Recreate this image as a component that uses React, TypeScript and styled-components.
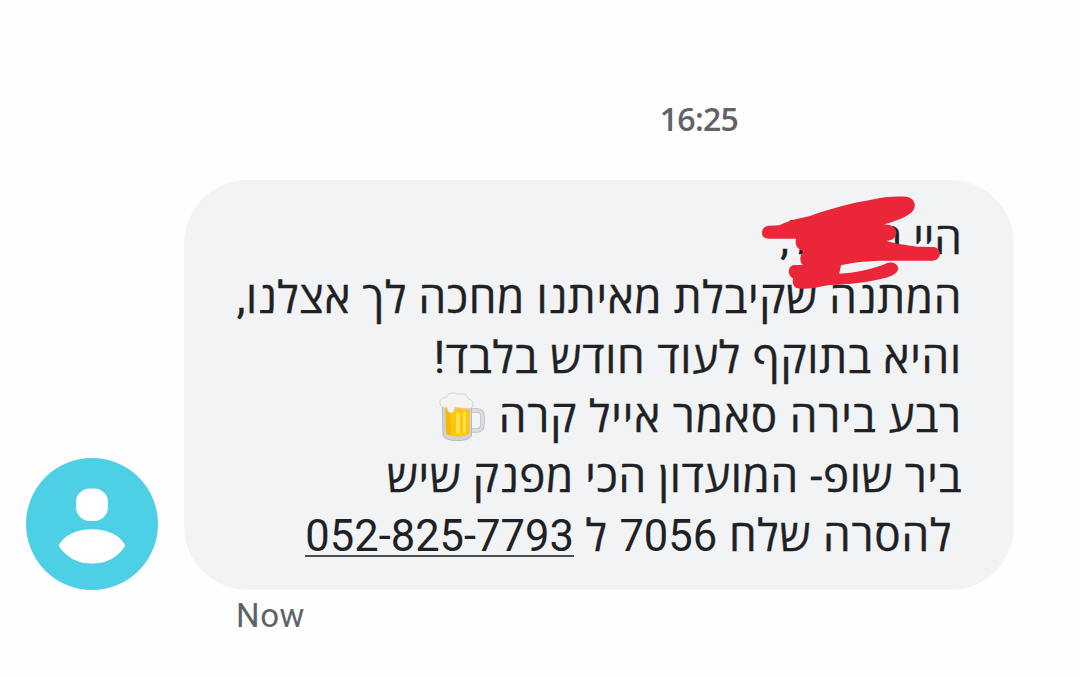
import { ReactNode } from "react";
import styled, { createGlobalStyle } from "styled-components";

const GlobalStyle = createGlobalStyle`
  * {
    box-sizing: border-box;
  }

  body {
    margin: 0;
    background: #fefefe;
  }
`;

const Screen = styled.main`
  width: 1080px;
  height: 677px;
  padding: 100px 66px 0 26px;
  overflow: hidden;
  background: #fefefe;
  font-family: Roboto, "Open Sans", "Noto Sans", sans-serif;
`;

const Timestamp = styled.time`
  display: block;
  width: 830px;
  margin-left: 158px;
  padding-left: 200px;
  color: #5f6368;
  font-family: "Open Sans", sans-serif;
  font-size: 32px;
  font-weight: 600;
  letter-spacing: -0.7px;
  line-height: 38px;
  text-align: center;
`;

const MessageRow = styled.section`
  display: flex;
  align-items: flex-end;
  gap: 26px;
  margin-top: 42px;
`;

const Avatar = styled.svg`
  flex: none;
  width: 132px;
  height: 132px;
`;

const Bubble = styled.div`
  position: relative;
  flex: none;
  width: 830px;
  height: 410px;
  padding: 29.5px 52px 0;
  border-radius: 64px;
  background: #f1f3f4;
  color: #202124;
  direction: rtl;
`;

const Line = styled.p<{ $indent?: number; $spacing?: number }>`
  height: 59.6px;
  margin: 0;
  padding-right: ${(props) => props.$indent ?? 0}px;
  font-size: 44px;
  letter-spacing: ${(props) => props.$spacing ?? 0.65}px;
  line-height: 59.6px;
  white-space: nowrap;
  -webkit-text-stroke: 0.35px currentColor;
`;

const HiddenName = styled.span`
  display: inline-block;
  width: 70px;
`;

const Digits = styled.span`
  font-size: 43.5px;
  letter-spacing: 0;
  -webkit-text-stroke: 0;
`;

const Phone = styled(Digits)`
  direction: ltr;
  unicode-bidi: isolate;
  border-bottom: 2px solid #4a4c4f;
  display: inline-block;
  height: 43px;
  line-height: 45px;
`;

const Beer = styled.svg`
  width: 46px;
  height: 50px;
  margin-right: 2px;
  vertical-align: -10px;
`;

const Scribble = styled.svg`
  position: absolute;
  top: 0;
  left: 556px;
  width: 210px;
  height: 120px;
`;

const Status = styled.div`
  margin: 7px 0 0 210px;
  color: #5f6368;
  font-size: 33px;
  letter-spacing: 0.6px;
  line-height: 38px;
`;

const PersonAvatar = () => (
  <Avatar viewBox="0 0 132 132">
    <circle cx="66" cy="66" r="66" fill="#4dcfe6" />
    <rect x="50" y="30.500" width="32" height="32.500" rx="14" fill="#fff" />
    <path
      d="M33.500 86C39 77 51 71.300 66 71.300S93 77 98.500 86c.6 1 .6 2 0 3C91 99.500 81 105.500 66 105.500S41 99.500 33.500 89c-.6-1-.6-2 0-3Z"
      fill="#fff"
    />
  </Avatar>
);

const BeerMug = () => (
  <Beer viewBox="0 0 46 50">
    <path
      d="M32 18.500h6c4 0 5.500 2 5.500 6v7c0 5-2 7-6 7H32"
      fill="none"
      stroke="#b9bcbe"
      strokeWidth="4.500"
    />
    <path
      d="M32 18.500h6c4 0 5.500 2 5.500 6v7c0 5-2 7-6 7H32"
      fill="none"
      stroke="#dadcdd"
      strokeWidth="3"
    />
    <path
      d="M3.500 14h29v29c0 7.500-28 7.500-28.500 0Z"
      fill="#d0d2d3"
      stroke="#b9bbbd"
    />
    <path d="M6 15h24.500v26c-3 4.500-20 4.500-23.500 0Z" fill="#fdc60a" />
    <path d="M17 21h4v21h-4zM24 20h3v21h-3z" fill="#ffe04d" />
    <path d="M7 20h4l1 23c-2 0-4-1-5-2z" fill="#f9b50a" />
    <path
      d="M2 13.500c-3-4 0-8 5-8 3-6 9-5 12-3 5-2 9 0 10 4 6 2 6 7 3 10-5 1-9-1-16-1-1 2-1 5.500-4 5.500S9 18 8 15.500c-2 .5-5 0-6-2Z"
      fill="#f5f4f1"
      stroke="#d2d2d0"
    />
  </Beer>
);

const RedScribble = () => (
  <Scribble viewBox="0 0 630 360">
    <path
      d="M66 158C66 143 78 136 92 137L118 136C140 124 165 118 210 108C270 86 340 68 390 60C430 50 465 48 500 50C530 56 532 88 508 102C485 118 450 128 430 134C450 132 468 140 469 158C468 174 455 182 438 182C460 190 500 195 530 200L580 201C606 204 606 238 580 242L420 242C370 244 330 248 303 256L298 281C340 280 400 268 440 250C460 242 478 254 474 270C465 290 430 296 390 304C340 314 290 312 250 318C215 326 190 328 168 324C158 316 156 304 160 296C142 288 142 262 158 256C170 254 182 256 188 254C178 246 178 222 192 214C172 208 164 195 168 176L92 176C76 176 66 172 66 158Z"
      fill="#ea2638"
    />
  </Scribble>
);

const Message = ({ children }: { children: ReactNode }) => (
  <MessageRow>
    <PersonAvatar />
    <Bubble>{children}</Bubble>
  </MessageRow>
);

const App = () => (
  <>
    <GlobalStyle />
    <Screen>
      <Timestamp>16:25</Timestamp>
      <Message>
        <Line $spacing={0}>
          היי ר<HiddenName />ל,
        </Line>
        <Line>המתנה שקיבלת מאיתנו מחכה לך אצלנו,</Line>
        <Line $spacing={0.8}>והיא בתוקף לעוד חודש בלבד!</Line>
        <Line $spacing={0.9}>
          רבע בירה סאמר אייל קרה <BeerMug />
        </Line>
        <Line $spacing={0.6}>ביר שופ- המועדון הכי מפנק שיש</Line>
        <Line $indent={10} $spacing={0.8}>
          להסרה שלח <Digits>7056</Digits> ל <Phone>052-825-7793</Phone>
        </Line>
        <RedScribble />
      </Message>
      <Status>Now</Status>
    </Screen>
  </>
);

export default App;
